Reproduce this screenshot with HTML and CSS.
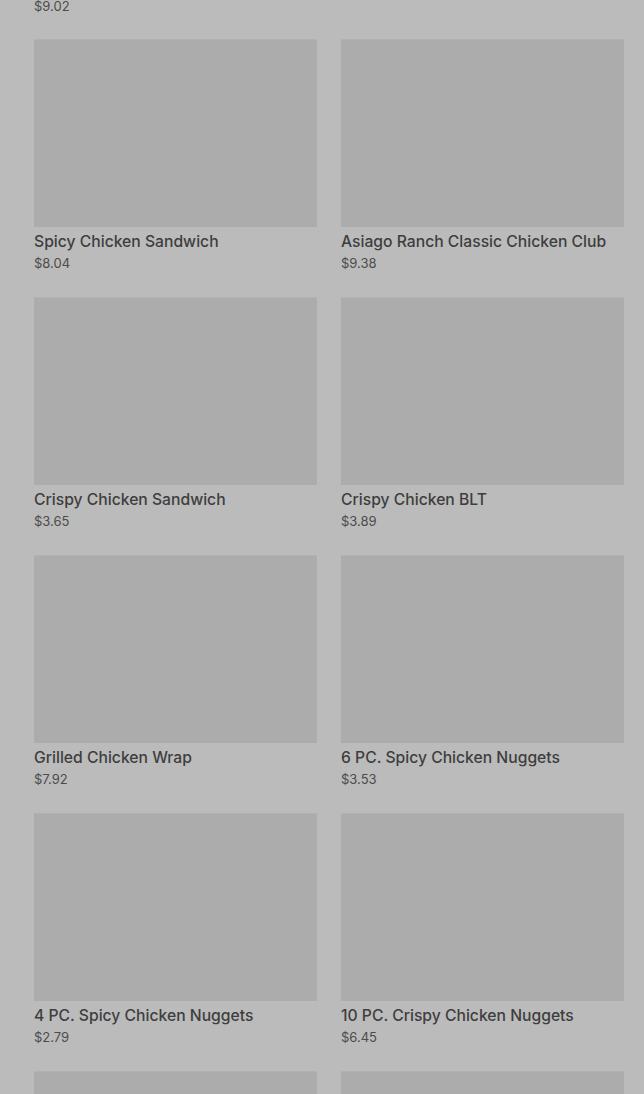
FILE: index.html
```html
<!DOCTYPE html>
<html>
<head>
<meta charset="utf-8">
<link rel="stylesheet" href="styles.css">
</head>
<body>
<div class="page">
  <div class="tail"><div class="price">$9.02</div></div>
  <div class="grid">
    <div class="card"><div class="img"></div><div class="title">Spicy Chicken Sandwich</div><div class="price">$8.04</div></div>
    <div class="card"><div class="img"></div><div class="title">Asiago Ranch Classic Chicken Club</div><div class="price">$9.38</div></div>
    <div class="card"><div class="img"></div><div class="title">Crispy Chicken Sandwich</div><div class="price">$3.65</div></div>
    <div class="card"><div class="img"></div><div class="title">Crispy Chicken BLT</div><div class="price">$3.89</div></div>
    <div class="card"><div class="img"></div><div class="title">Grilled Chicken Wrap</div><div class="price">$7.92</div></div>
    <div class="card"><div class="img"></div><div class="title">6 PC. Spicy Chicken Nuggets</div><div class="price">$3.53</div></div>
    <div class="card"><div class="img"></div><div class="title">4 PC. Spicy Chicken Nuggets</div><div class="price">$2.79</div></div>
    <div class="card"><div class="img"></div><div class="title">10 PC. Crispy Chicken Nuggets</div><div class="price">$6.45</div></div>
    <div class="card"><div class="img"></div></div>
    <div class="card"><div class="img"></div></div>
  </div>
</div>
</body>
</html>
```
FILE: styles.css
```css
html, body {
  margin: 0;
  padding: 0;
  background: #bbbbbb;
  overflow: hidden;
}
.page {
  padding: 0 20px 0 34px;
  font-family: Inter, "Noto Sans", sans-serif;
}
.tail {
  margin-top: -3px;
  height: 20px;
}
.grid {
  margin-top: 23px;
  display: grid;
  grid-template-columns: 283px 283px;
  grid-auto-rows: 233px;
  column-gap: 24px;
  row-gap: 25px;
}
.card {
  display: flex;
  flex-direction: column;
}
.img {
  flex: none;
  height: 187px;
  background: #acacac;
  box-shadow: 0 -1px 0 #b2b2b2;
}
.title {
  margin-top: 3px;
  font-size: 15.7px;
  line-height: 24px;
  font-weight: 500;
  color: #3e3e3e;
  white-space: nowrap;
}
.price {
  font-size: 13px;
  line-height: 19px;
  color: #4c4c4c;
}
```
